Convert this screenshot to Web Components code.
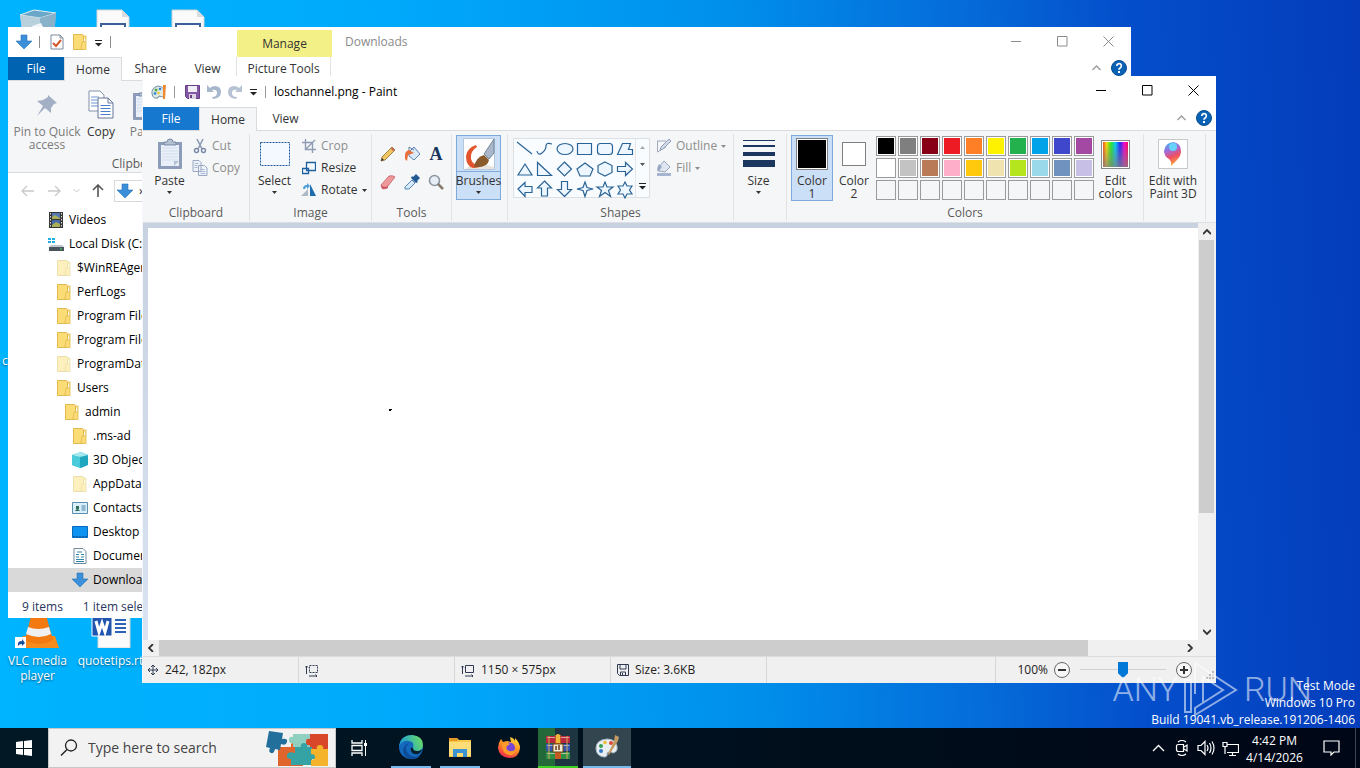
<!DOCTYPE html>
<html lang="en">
<head>
<meta charset="utf-8">
<title>Desktop</title>
<style>
  html,body{margin:0;height:100%;overflow:hidden}
  body{font:12px/16px "Open Sans","Noto Sans",sans-serif;color:#1e1e1e}
</style>
</head>
<body>
<desktop-shell>
  <desktop-icon icon="bin" style="grid-area:1/1"></desktop-icon>
  <desktop-icon icon="doc" style="grid-area:1/2"></desktop-icon>
  <desktop-icon icon="doc" style="grid-area:1/3"></desktop-icon>
  <desktop-icon style="grid-area:4/1;text-align:left">c</desktop-icon>
  <desktop-icon icon="vlc" style="grid-area:7/1">VLC media player</desktop-icon>
  <desktop-icon icon="word" style="grid-area:7/2">quotetips.rtf</desktop-icon>

  <app-window class="explorer" slot="windows" inactive>
    <explorer-quick slot="quick"></explorer-quick>
    <span slot="title">Downloads</span>
    <ribbon-tab slot="tabs" kind="file">File</ribbon-tab>
    <ribbon-tab slot="tabs" kind="active">Home</ribbon-tab>
    <ribbon-tab slot="tabs">Share</ribbon-tab>
    <ribbon-tab slot="tabs">View</ribbon-tab>
    <ribbon-tab slot="tabs" kind="tool">Picture Tools</ribbon-tab>
    <explorer-body></explorer-body>
  </app-window>

  <app-window class="paint" slot="windows">
    <paint-quick slot="quick"></paint-quick>
    <span slot="title">loschannel.png - Paint</span>
    <ribbon-tab slot="tabs" kind="file">File</ribbon-tab>
    <ribbon-tab slot="tabs" kind="active">Home</ribbon-tab>
    <ribbon-tab slot="tabs">View</ribbon-tab>
    <paint-ribbon></paint-ribbon>
    <paint-workspace></paint-workspace>
    <paint-status></paint-status>
  </app-window>

  <run-mark slot="mark"></run-mark>
  <task-bar slot="taskbar"></task-bar>
</desktop-shell>

<script>
// name: [width, height, svg content]
const folder = (a,b)=> `<path d="M.5.5h9l1 1.500V15.500H.5z" fill="${a}" stroke="${b}"/><path d="M9 8l4-.5v8H8z" fill="${a}" stroke="${b}" stroke-width=".8"/><path d="M10.500 2H13v5.500" fill="${a}" stroke="${b}" stroke-width=".8"/>`;
const ICONS = {
  bin: [48,48,`<path d="M6 15l14-5 22 3-3 35H10z" fill="#9fc0d4"/><path d="M6 15l14-5 22 3-16 5z" fill="#6aa7c8" stroke="#e6eef2"/><path d="M6 15l20 3v30H10z" fill="#b9d0dd"/><path d="M26 18l16-5-3 35H26z" fill="#88b1ca"/><path d="M18 26l9-3 4 8-8 5z" fill="#f3f7fa"/>`],
  doc: [48,48,`<path d="M8 10h25l7 7v31H8z" fill="#fafafa" stroke="#d0d3d6"/><path d="M33 10v7h7z" fill="#d9dde0"/><path d="M12 24h24v24H12z" fill="#fff" stroke="#3d5f9c" stroke-width="2"/>`],
  word: [48,48,`<path d="M9 10h25l7 7v31H9z" fill="#fbfbfb" stroke="#d5d5d5"/><path d="M26 20h11M26 24h11M26 28h11M26 32h11" stroke="#2c62b8" stroke-width="2"/><path d="M3 16h20v20H3z" fill="#1f55ae" stroke="#fff"/><path d="M7 21l3 11 3-9 3 9 3-11" fill="none" stroke="#fff" stroke-width="3"/>`],
  vlc: [48,48,`<path d="M9 36h32l4 12H5z" fill="#f78c1e"/><path d="M20 4h9l10 36q-14 8-28 0z" fill="#f27a10"/><path d="M18 8h13l2 7q-9 3-17 0z" fill="#eee"/><path d="M14 27q10 4 21 0l2 7q-12 6-25 0z" fill="#f0f0f0"/><path d="M1 37h11v11H1z" fill="#fff"/><path d="M4 46q-1-5 4-5v-2l3 4-3 3v-2q-3 0-4 2z" fill="#1a4f9c"/>`],
  down: [16,16,`<path d="M5 1h6v6h5l-8 8-8-8h5z" fill="#3b8fd8" stroke="#2a72ba" stroke-width=".6"/>`],
  check: [14,16,`<path d="M1 1h9l3 3v11H1z" fill="#fff" stroke="#7c8a9c"/><path d="M10 1v3h3" fill="none" stroke="#7c8a9c"/><path d="M3 9l3 3 5-6" fill="none" stroke="#d4572a" stroke-width="2"/>`],
  folder: [14,16,folder('#fbdc77','#e3b84d')],
  pale: [14,16,folder('#fdf0bf','#eddfa8')],
  more: [9,9,`<path d="M1 2.500h7" stroke="#222"/><path d="M1 5h7l-3.500 3.500z" fill="#222"/>`],
  caret: [5,3,`<path d="M0 0h5L2.500 3z" fill="currentColor"/>`],
  caretup: [5,3,`<path d="M0 3h5L2.500 0z" fill="#a8a8a8"/>`],
  min: [11,11,`<path d="M0 5.500h10" stroke="currentColor"/>`],
  max: [11,11,`<path d="M.5.5h9.500v9.500H.5z" fill="none" stroke="currentColor"/>`],
  close: [11,11,`<path d="M.5.5l10 10M10.500.5l-10 10" stroke="currentColor"/>`],
  chevron: [9,6,`<path d="M.5 5l4-4 4 4" fill="none" stroke="#a0a0a0" stroke-width="1.500"/>`],
  help: [16,16,`<circle cx="8" cy="8" r="7.500" fill="#0a62b5" stroke="#064d94"/><path d="M5.800 6q0-2.300 2.300-2.300T10.300 6q0 1.200-1.200 1.900Q8 8.500 8 9.800" fill="none" stroke="#fff" stroke-width="1.700"/><path d="M7 11h2v2H7z" fill="#fff"/>`],
  pin: [24,24,`<path d="M13 2l9 8-3 1-3 4 0 5-6-5-8 8 6-10-6-5 6-1 5-3z" fill="#a3afc4"/>`],
  pages: [26,30,`<path d="M1 1h11l4 4v16H1z" fill="#fff" stroke="#8391a8"/><path d="M3 7h8M3 10h8M3 13h8M3 16h8" stroke="#6b94cf"/><path d="M10 8h10l5 5v15H10z" fill="#fff" stroke="#65779a"/><path d="M20 8v5h5" fill="none" stroke="#65779a"/><path d="M12.500 15.500h10M12.500 18.500h10M12.500 21.500h10M12.500 24.500h10" stroke="#4a80cb"/>`],
  paste: [26,32,`<path d="M1 4h24v26q0 1-1 1H2q-1 0-1-1z" fill="#8d9cb8"/><path d="M4 7h18v21H4z" fill="#eaf0fa"/><path d="M5 10h16M5 13h16M5 16h16M5 19h16M5 22h16" stroke="#d4ddec"/><path d="M17 28v-5h5z" fill="#b4c2d8"/><path d="M7 7V4h3q0-3 3-3t3 3h3v3z" fill="#b5c0d1" stroke="#7787a5"/>`],
  back: [14,12,`<path d="M6 1L1 6l5 5M1 6h12" fill="none" stroke="#c9c9c9" stroke-width="1.300"/>`],
  fwd: [14,12,`<path d="M8 1l5 5-5 5M13 6H1" fill="none" stroke="#c9c9c9" stroke-width="1.300"/>`],
  dim: [7,5,`<path d="M.5 1l3 3 3-3" fill="none" stroke="#c9c9c9"/>`],
  up: [12,14,`<path d="M1 6l5-5 5 5M6 1v12" fill="none" stroke="#555" stroke-width="1.600"/>`],
  video: [16,16,`<path d="M1 0h14v16H1z" fill="#343434"/><path d="M4 1h8v6H4z" fill="#5478b4"/><path d="M4 8h8v7H4z" fill="#4867aa"/><path d="M4 5l3-2 5 3v1H4zM4 13l4-3 4 2v3H4z" fill="#a8ae55"/><path d="M2.500 1v15M13.500 1v15" stroke="#ddd" stroke-dasharray="1.500 1.500"/>`],
  disk: [16,16,`<path d="M0 2h3v2H0zm4 0h3v2H4zM0 5h3v2H0zm4 0h3v2H4z" fill="#22b0e2"/><path d="M3 9h11l2 2H1z" fill="#bfc5ca"/><path d="M1 11h15v4H1z" fill="#4b545c"/><path d="M12 13h2" stroke="#3be05b"/>`],
  cube: [16,16,`<path d="M0 3l9-3 7 3v10l-7 3-9-3z" fill="#1fa7c0"/><path d="M0 3l8 2v11l-8-3z" fill="#49cbd9"/><path d="M0 3l9-3 7 3-8 2z" fill="#a5e9ee"/>`],
  card: [16,16,`<path d="M.5 2.500h15v11H.5z" fill="#d9effa" stroke="#5d8fb0"/><path d="M3 11q2-4 5 0zM4 6h3v3H4z" fill="#2f6d5b"/><path d="M9.500 6h4M9.500 8h4M9.500 10h4" stroke="#4581aa"/>`],
  desk: [16,16,`<path d="M.5 2.500h15v11H.5z" fill="#0f93f2" stroke="#0a69ba"/><path d="M1 12.500h14" stroke="#075faf" stroke-dasharray="2 1"/>`],
  docs: [16,16,`<path d="M2 .5h9l3 3v12H2z" fill="#fff" stroke="#6f8b9f"/><path d="M5 4h5M4 6.500h3M9 6.500h3M4 9h3M9 9h3M4 11.500h8M4 13.500h8" stroke="#2f86a8"/>`],
  paint: [16,16,`<path d="M7 2Q0 4 1 10q1 5 6 4l1-2q4 2 5-1 2-8-6-9z" fill="#dfe9e4" stroke="#6c8ca8"/><circle cx="5" cy="6" r="1.500" fill="#57a843"/><circle cx="9" cy="5" r="1.300" fill="#3b7fd0"/><circle cx="4" cy="9.500" r="1.400" fill="#3a90d8"/><circle cx="7.500" cy="9" r="1.300" fill="#f0c72e"/><path d="M12 1h3l-1 14h-2z" fill="#ee8a32"/>`],
  save: [15,14,`<path d="M.5.5h14v13h-12l-2-2z" fill="#8558a5" stroke="#663f86"/><path d="M3 1h9v6H3z" fill="#f2eef6"/><path d="M4 9h7v5H4z" fill="#ddd4e4"/><path d="M5 10h2v3H5z" fill="#663f86"/>`],
  undo: [14,14,`<path d="M0 0v7h7L5 5q5-1 5 3t-5 4l1 2q8-1 8-7T8 1Q5 1 3 3z" fill="#a9b7cd"/>`],
  redo: [14,14,`<path d="M14 0v7H7l2-2Q4 4 4 8t5 4l-1 2Q0 13 0 7t6-6q3 0 5 2z" fill="#b7c2d4"/>`],
  cut: [16,16,`<path d="M5 1l5 10M11 1L6 11" stroke="#8c9ab4" stroke-width="1.600"/><circle cx="4.500" cy="12.500" r="2" fill="none" stroke="#7888a8" stroke-width="1.400"/><circle cx="11.500" cy="12.500" r="2" fill="none" stroke="#7888a8" stroke-width="1.400"/>`],
  copy: [16,16,`<path d="M1 .5h6l2 2v9H1zM6.500 5.500h6l2.500 2.500v7.500H6.500z" fill="#eef3fa" stroke="#98a7c2"/><path d="M2.500 3.500h4M2.500 5.500h3M2.500 7.500h3M8.500 9.500h4M8.500 11.500h5M8.500 13.500h5" stroke="#a9b9d5"/>`],
  select: [30,24,`<path d="M.5.5h29v23H.5z" fill="#f3f9ff" stroke="#1d5a97" stroke-dasharray="2 1"/>`],
  crop: [14,14,`<path d="M3.500 0v10.500H14M0 3.500h10.500V14M4 10l9-9" fill="none" stroke="#8f9cb5" stroke-width="1.400"/>`],
  resize: [14,14,`<path d="M.5 7.500h6v5h-6zM4.500 1.500h9v8h-9z" fill="#f5faff" stroke="#1d5f9f" stroke-width="1.300"/>`],
  rotate: [16,16,`<path d="M7 14H0l7-7z" fill="#aeb9c6"/><path d="M9 14h6L9 2z" fill="#1d6caf"/><path d="M2 7q0-4 4-4V1l3 3-3 3V5Q4 5 4 7z" fill="#4d9fd8"/>`],
  pencil: [16,16,`<path d="M1 15l1-4L12 1l3 3L5 14z" fill="#f0c65e" stroke="#8a6a2f" stroke-width=".8"/><path d="M1 15l1-3 2 2z" fill="#333"/><path d="M12 1l3 3-2 1-2-2z" fill="#c46655"/>`],
  bucket: [16,16,`<path d="M5 6l5-5 6 7-6 6-5-4z" fill="#dbe8f6" stroke="#5a82b5"/><path d="M5 5V1l5 3" fill="none" stroke="#6b7f9c"/><path d="M5 4Q0 5 1 13l2 2 1-6 6-2z" fill="#e9703c"/>`],
  eraser: [16,16,`<path d="M1 11l8-9q4-1 6 1l-7 9q-3 4-6 2z" fill="#ee9a9d" stroke="#bf5e66" stroke-width=".8"/><path d="M1 11q3 3 7 1v2q-3 2-6 1z" fill="#d25f69"/>`],
  dropper: [16,16,`<path d="M9 3l3-3 4 4-3 3 1 1-2 1-5-5 1-2z" fill="#245a94"/><path d="M8 6l3 3-6 6H1v-2z" fill="#d7ebfa" stroke="#5588b8"/>`],
  zoom: [16,16,`<circle cx="6.500" cy="6.500" r="5" fill="#e7eef5" stroke="#8d979f" stroke-width="1.600"/><path d="M10 10l5 5" stroke="#877b70" stroke-width="2.500"/>`],
  brush: [32,32,`<path d="M.5.5h31v31H.5z" fill="#fff" stroke="#b4c7dc"/><path d="M2 31q5-5 20-5l9 3v2z" fill="#e9e4e0"/><path d="M13 7Q4 10 3 18q0 10 7 12 8 0 8-3-8 1-10-6-1-8 6-12z" fill="#e2552c"/><path d="M21 16L31 1v14l-5 6z" fill="#a9b7c8" stroke="#74879d"/><path d="M11 29q2-10 10-12l5 5q-1 8-15 7z" fill="#8a5a2c"/>`],
  pen: [16,16,`<path d="M1 3h9M1.500 3v11L10 9" fill="none" stroke="#a0a9bd"/><path d="M4 12l1-3 8-8 2 2-8 8z" fill="#d0d8e6" stroke="#95a1ba"/>`],
  fill: [16,16,`<path d="M3 7l5-6 6 6-5 5-6-1z" fill="#e0e6f0" stroke="#98a5bf"/><path d="M3 4Q0 9 2 12l4-5z" fill="#97a8c6"/><path d="M1 13h14v3H1z" fill="#a6b6d0"/>`],
  sizes: [32,28,`<path d="M0 0h32v1H0zM0 5h32v2H0zM0 12h32v4H0zM0 20h32v7H0z" fill="#1b365f"/>`],
  pin3d: [30,30,`<defs><linearGradient id="g" x1="0" y1="0" x2=".3" y2="1"><stop offset="0" stop-color="#38bdf4"/><stop offset=".4" stop-color="#a06bdc"/><stop offset=".7" stop-color="#f14d64"/><stop offset="1" stop-color="#f9a13c"/></linearGradient></defs><path d="M.5.5h29v29H.5z" fill="#fff" stroke="#c8c8c8"/><path d="M13 27q1-4-2-7-5-3-5-8 1-8 9-9 8 1 8 9 0 5-4 9z" fill="url(#g)"/><circle cx="15" cy="8" r="4" fill="#67d3fa"/>`],
  cross: [12,12,`<path d="M6 1v10M1 6h10M4 3l2-2 2 2M4 9l2 2 2-2M3 4L1 6l2 2M9 4l2 2-2 2" fill="none" stroke="#303a55"/>`],
  selsize: [14,13,`<path d="M1.500 10V2M0 3.500L1.500 2 3 3.500M4 12h8M10.500 10.500L12 12l-1.500 1.500" fill="none" stroke="#303a55"/><path d="M4.500 1.500h8v7h-8z" fill="none" stroke="#303a55" stroke-dasharray="2 1"/>`],
  imgsize: [14,13,`<path d="M1.500 10V2M0 3.500L1.500 2 3 3.500M4 12h8M10.500 10.500L12 12l-1.500 1.500M4.500 1.500h8v7h-8z" fill="none" stroke="#303a55"/>`],
  disk2: [12,12,`<path d="M.5.5h11v11h-9l-2-2zM3 1v4h6V1M3.500 11.500V8h5v3.500M5.500 9v2" fill="none" stroke="#303a55"/>`],
  minus: [16,16,`<circle cx="8" cy="8" r="7.500" fill="#f7f7f7" stroke="#666"/><path d="M4 8h8" stroke="#333" stroke-width="2"/>`],
  plus: [16,16,`<circle cx="8" cy="8" r="7.500" fill="#f7f7f7" stroke="#666"/><path d="M4 8h8M8 4v8" stroke="#333" stroke-width="2"/>`],
  grip: [8,8,`<path d="M6 0h2v2H6zM3 3h2v2H3zm3 0h2v2H6zM0 6h2v2H0zm3 0h2v2H3zm3 0h2v2H6z" fill="#bbb"/>`],
  aleft: [6,8,`<path d="M5 0L1 4l4 4" fill="none" stroke="#333" stroke-width="1.800"/>`],
  aright: [6,8,`<path d="M1 0l4 4-4 4" fill="none" stroke="#333" stroke-width="1.800"/>`],
  aup: [8,6,`<path d="M0 5l4-4 4 4" fill="none" stroke="#333" stroke-width="1.800"/>`],
  adown: [8,6,`<path d="M0 1l4 4 4-4" fill="none" stroke="#333" stroke-width="1.800"/>`],
  start: [16,16,`<path d="M0 2l7-1v7H0zM8 1l8-1v8H8zM0 9h7v6l-7-1zM8 9h8v7l-8-1z" fill="#fff"/>`],
  search: [18,18,`<circle cx="11" cy="6.500" r="5.500" fill="none" stroke="#222" stroke-width="1.300"/><path d="M7 10.500L1 16.500" stroke="#222" stroke-width="1.500"/>`],
  puzzle: [62,36,`<path d="M12 17h13v-3q3-3 6 0v3h6v19H12z" fill="#e0652c"/><path d="M27 4h17v13H27v-4q-4 1-4-3t4-3z" fill="#8fd0c0"/><path d="M44 4h18v15H44v-4q-4 1-4-3t4-3z" fill="#d9472b"/><path d="M29 17h6q-1-4 3-4t3 4h5v6q4-1 4 3t-4 3v6H25v-6q-5 0-4-4t8-2z" fill="#35a2a4"/><path d="M45 19h6q-1-4 3-4t3 4h5v17H45v-6q4 0 4-3t-4-3z" fill="#f5b32b"/><path d="M3 1l14 2-1 6q6-1 5 3t-6 2l-1 6-5-1q-1 5-4 4t-1-5L0 17z" fill="#226f9c"/>`],
  tasks: [18,16,`<path d="M1 0v3h10V0M1 16v-3h10v3M1 5.500h10v5H1z" fill="none" stroke="#fff" stroke-width="1.300"/><path d="M14.500 0v16" stroke="#fff"/><path d="M13 3h3v3h-3z" fill="#fff"/>`],
  edge: [26,26,`<defs><linearGradient id="e" x1="0" y1=".6" x2="1" y2=".3"><stop offset="0" stop-color="#1597dd"/><stop offset="1" stop-color="#6bdc65"/></linearGradient></defs><circle cx="13" cy="13" r="12" fill="#1469bd"/><path d="M1 12Q3 1 14 1q11 1 11 10 0 6-7 6-4 0-3-3 2-6-4-7Q5 6 1 12z" fill="url(#e)"/><path d="M12 9q-6 3-3 9 5 7 13 4-4 4-10 3-7-2-7-9 1-6 7-7z" fill="#0d4c98"/><path d="M15 14q0 3 4 3 4 0 5-2 0 3-4 5-5 1-7-3-1-5 2-3z" fill="#06202f"/>`],
  files: [24,24,`<path d="M1 3h8l2 2h12v17H1z" fill="#f7c748"/><path d="M1 7h22v14H1z" fill="#fcdd78"/><path d="M1 3h8l1 3H1z" fill="#e49a27"/><path d="M5 22v-8h14v8h-4v-4H9v4z" fill="#3c93d2"/>`],
  firefox: [24,24,`<defs><linearGradient id="f" x1=".8" y1="0" x2=".3" y2="1"><stop offset="0" stop-color="#ffe13b"/><stop offset=".5" stop-color="#ff8c24"/><stop offset="1" stop-color="#f0244d"/></linearGradient></defs><path d="M4 4l2 3 4-1 4 1-1-5q4 1 5 4V3q5 5 5 10-1 10-11 10Q2 22 1 13q0-5 3-9z" fill="url(#f)"/><circle cx="12.500" cy="13" r="5.500" fill="#7846d6"/><path d="M5 9q4-3 8 0l-3 2q-2 3 2 5 4 1 7-2-1 7-7 6-7-1-7-11z" fill="#ff9b2a"/>`],
  winrar: [26,26,`<path d="M1 2h24v7H1z" fill="#b8283f"/><path d="M1 10h24v7H1z" fill="#3657b2"/><path d="M1 18h24v7H1z" fill="#2d8e46"/><path d="M2 3.500h22M2 11.500h22M2 19.500h22" stroke="#e8d7c8" stroke-width=".7"/><path d="M4 2v23M22 2v23" stroke="#d3aa58"/><path d="M10 1h6v24h-6z" fill="#c65a20"/><path d="M11 1q2-2 4 0v8h-4z" fill="#f1b73a"/><path d="M8 10h10v8H8z" fill="#f4ead4" stroke="#754713"/><path d="M11 12v4M14 11v5" stroke="#633a17" stroke-width="1.500"/>`],
  palette: [26,26,`<path d="M13 5Q2 6 2 14t8 9q4 0 3-4 3-3 6 0 5-1 4-7-2-7-10-7z" fill="#e9eef0" stroke="#a7b9c5"/><circle cx="7" cy="12" r="2" fill="#35a054"/><circle cx="11" cy="8.500" r="1.800" fill="#efbb32"/><circle cx="17" cy="9" r="2" fill="#dd4b3a"/><circle cx="7" cy="17" r="2" fill="#3378c8"/><path d="M21 1l4 2-1 4-9 14-1-1 6-13z" fill="#c49a63"/>`],
  tup: [13,8,`<path d="M1 7l5.500-5.500L12 7" fill="none" stroke="#fff" stroke-width="1.300"/>`],
  meet: [14,16,`<path d="M3.500 4.500h5v7h-5q-2 0-2-2v-3q0-2 2-2zM9 7l3-2v6L9 9M3 2q4-3 8 0M3 14q4 3 8 0" fill="none" stroke="#fff" stroke-width="1.200"/>`],
  sound: [18,16,`<path d="M1 5.500h3l4-4v13l-4-4H1zM10 5q2 3 0 6M12.500 3q3 5 0 10M15 1.500q4 6.500 0 13" fill="none" stroke="#fff" stroke-width="1.200"/>`],
  net: [17,15,`<path d="M5.500 3.500h11v8H5M10.500 12v3M7 14.500h7M1 1.500h4v4H1zM3 6v7" fill="none" stroke="#fff" stroke-width="1.200"/>`],
  note: [17,16,`<path d="M1 1h15v11h-5l-3 3v-3H1z" fill="none" stroke="#fff" stroke-width="1.200"/>`],
  play: [56,58,`<path d="M12 34V3l41 27-41 25v-7l28-18-20-13v25"/><path d="M2 20v32h6V20z"/>`],
  // the shapes to draw, one per 20px cell
  gallery: [120,60,`<g fill="#eef7ff" stroke="#2a6496" stroke-width="1.200"><path d="M3 3l15 12"/><path d="M23 12q1 5 5 2t4-7 6-2" fill="none"/><ellipse cx="51" cy="10" rx="8" ry="5.500"/><path d="M63.500 4.500h14v11h-14z"/><rect x="83.500" y="4.500" width="15" height="11" rx="3"/><path d="M103.500 15.500l5-11h8l-2 6h4v5z"/>
  <path d="M11 25l7 11H4zM23.500 23.500v13h14zM50.500 23l7 7-7 7-7-7zM71 24l8 6-3 7h-10l-3-7zM91 23l7 3.500v7L91 37l-7-3.500v-7zM103.500 27.500h8v-4l7 6.500-7 6.500v-4h-8z"/>
  <path d="M4 50l7-6.500v4h7v6h-7v4zM30.500 42l7 7h-4v8h-6v-8h-4zM50.500 57.500l7-7h-4v-8h-6v8h-4zM71 43l2 5.500 6 1.500-6 1.500-2 6-2-6-6-1.500 6-1.500zM91 43l2 5h6l-4.500 3.500 2 6-5.500-4-5.500 4 2-6L83 48h6zM111 43l2 4h5l-2.500 4 2.500 4h-5l-2 4-2-4h-5l2.500-4-2.500-4h5z"/></g>`],
};

class Part extends HTMLElement {
  constructor(){
    super();
    this.attachShadow({mode:'open'});
  }
  connectedCallback(){ this.shadowRoot.innerHTML = '<style>*{box-sizing:border-box}button{font:inherit;color:inherit;border:0;background:none;padding:0;margin:0}</style>' + this.view(); }
}

customElements.define('ui-icon', class extends Part {
  view(){
    const [w,h,svg] = ICONS[this.getAttribute('name')];
    return `<style>:host{display:block;flex:none}svg{display:block}</style>
      <svg width="${w}" height="${h}" viewBox="0 0 ${w} ${h}" aria-hidden="true">${svg}</svg>`;
  }
});
const icon = (name)=> `<ui-icon name="${name}"></ui-icon>`;

customElements.define('desktop-shell', class extends Part {
  view(){ return `
    <style>
      :host{display:flex;flex-direction:column;height:100vh;overflow:hidden}
      .desk{position:relative;flex:1;overflow:hidden;
        background:linear-gradient(88deg,#00b4ff 0%,#00a9fb 30%,#0090ec 54%,#056ad8 72%,#044ecb 83%,#043cba 100%)}
      .icons{display:grid;grid-template-columns:repeat(3,75px);grid-template-rows:repeat(7,100px)}
      ::slotted(app-window){position:absolute}
      ::slotted(.explorer){top:27px;left:8px;right:229px;bottom:110px;--title-h:30px;--file:#0063b1}
      ::slotted(.paint){top:76px;left:142px;right:144px;bottom:45px;border-left:1px solid #f4f8fc;--title-h:31px}
      ::slotted(run-mark){position:absolute;right:0;bottom:0}
    </style>
    <div class="desk">
      <div class="icons"><slot></slot></div>
      <slot name="windows"></slot>
      <slot name="mark"></slot>
    </div>
    <slot name="taskbar"></slot>`;
  }
});

customElements.define('desktop-icon', class extends Part {
  view(){
    const name = this.getAttribute('icon');
    return `
    <style>
      :host{display:block;width:75px;height:100px;text-align:center;color:#fff;line-height:15px;overflow:visible}
      .pic{height:48px;display:flex;justify-content:center;margin-bottom:5px}
      .label{padding:0 2px;text-shadow:0 1px 2px #0008}
    </style>
    <div class="pic">${name ? icon(name) : ''}</div>
    <div class="label"><slot></slot></div>`;
  }
});

customElements.define('app-window', class extends Part {
  view(){ return `
    <style>
      :host{display:flex;flex-direction:column;background:#fff;overflow:hidden;box-sizing:border-box}
      .title{display:flex;height:var(--title-h);flex:none;color:#000}
      :host([inactive]) .title{color:#8a8a8a}
      .name{flex:1;line-height:var(--title-h)}
      .title button{width:46px;display:grid;place-items:center;padding-bottom:2px}
      .tabs{display:flex;height:24px;flex:none;border-bottom:1px solid #dadbdc}
      .tail{margin-left:auto;display:flex;align-items:center;gap:10px;padding:0 4px 2px 0}
    </style>
    <div class="title">
      <slot name="quick"></slot>
      <div class="name"><slot name="title"></slot></div>
      <button aria-label="Minimize">${icon('min')}</button>
      <button aria-label="Maximize">${icon('max')}</button>
      <button aria-label="Close">${icon('close')}</button>
    </div>
    <div class="tabs">
      <slot name="tabs"></slot>
      <div class="tail">${icon('chevron')}<button aria-label="Help">${icon('help')}</button></div>
    </div>
    <slot></slot>`;
  }
});

customElements.define('ribbon-tab', class extends Part {
  view(){ return `
    <style>
      :host{display:block;width:57px;height:24px}
      button{width:100%;height:23px;color:#333;white-space:nowrap}
      :host([kind=file]){width:56px}
      :host([kind=file]) button{background:var(--file,#1778cf);color:#fff}
      :host([kind=active]){width:58px}
      :host([kind=active]) button{height:24px;background:#f5f6f7;border:1px solid #dadbdc;border-bottom:0}
      :host([kind=tool]){width:95px}
      :host([kind=tool]) button{border:solid #e3e3e3;border-width:0 1px}
    </style>
    <button><slot></slot></button>`;
  }
});

customElements.define('explorer-quick', class extends Part {
  view(){ return `
    <style>
      :host{display:flex;width:337px;color:#333}
      .bar{display:flex;align-items:center;gap:7px;width:229px;padding-left:8px}
      .mid{display:flex;gap:9px;padding-left:3px}
      i{width:1px;height:12px;background:#8c8c8c}
      .manage{width:95px;margin-top:3px;line-height:28px;text-align:center;background:#f3f087}
    </style>
    <div class="bar">${icon('down')}<i></i><div class="mid">${icon('check')}${icon('folder')}</div>${icon('more')}<i></i></div>
    <div class="manage">Manage</div>`;
  }
});

customElements.define('paint-quick', class extends Part {
  view(){ return `
    <style>
      :host{display:flex;align-items:center;gap:7px;width:131px;padding-left:8px;box-sizing:border-box}
      i{width:1px;height:12px;background:#9a9a9a}
      .bar{display:flex;gap:7px;padding-left:3px}
    </style>
    ${icon('paint')}<i></i><div class="bar">${icon('save')}${icon('undo')}${icon('redo')}</div>${icon('more')}<i></i>`;
  }
});

customElements.define('ribbon-group', class extends Part {
  view(){ return `
    <style>
      :host{display:flex;flex-direction:column;flex:none;width:var(--w);height:87px;box-sizing:border-box;padding:1px 0 0 4px;border-right:1px solid #e1e2e4}
      .items{display:flex;height:70px}
      .label{line-height:16px;text-align:center;color:#5a5a5a;padding-right:4px}
    </style>
    <div class="items"><slot></slot></div>
    <div class="label"><slot name="label"></slot></div>`;
  }
});

customElements.define('big-button', class extends Part {
  view(){
    const name = this.getAttribute('icon');
    return `
    <style>
      :host{display:block;flex:none;width:45px}
      button{width:100%;height:66px;display:flex;flex-direction:column;align-items:center;border:1px solid transparent;padding-top:2px;color:#333;line-height:13px}
      .pic{height:32px;display:grid;place-items:center;margin-bottom:4px}
      ui-icon[name=caret]{margin-top:4px}
      :host([dim]) button{color:#7a7a7a}
      :host([picked]) button{background:#cbdff6;border-color:#7daad8}
      :host([split]) button{height:65px;background:linear-gradient(#7daad8,#7daad8) 0 35px/100% 1px no-repeat #cbdff6}
    </style>
    <button>
      <div class="pic">${name ? icon(name) : '<slot name="pic"></slot>'}</div>
      <span><slot></slot></span>
      ${this.hasAttribute('menu') ? icon('caret') : ''}
    </button>`;
  }
});

customElements.define('small-button', class extends Part {
  view(){ return `
    <style>
      :host{display:block;height:22px;color:#333}
      :host([dim]){color:#8e8e8e}
      button{height:22px;display:flex;align-items:center;gap:4px}
      .pic{width:16px;display:grid;place-items:center}
    </style>
    <button><span class="pic">${icon(this.getAttribute('icon'))}</span><slot></slot>${this.hasAttribute('menu') ? icon('caret') : ''}</button>`;
  }
});

const COLORS = ['#000000','#7f7f7f','#880015','#ed1c24','#ff7f27','#fff200','#22b14c','#00a2e8','#3f48cc','#a349a4',
  '#ffffff','#c3c3c3','#b97a57','#ffaec9','#ffc90e','#efe4b0','#b5e61d','#99d9ea','#7092be','#c8bfe7'];

customElements.define('color-palette', class extends Part {
  view(){
    const cells = [...Array(30).keys()].map(i =>
      `<button aria-label="Color ${i+1}" style="background:${COLORS[i] || '#f5f6f7'}"></button>`).join('');
    return `
    <style>
      :host{display:grid;grid-template-columns:repeat(10,20px);grid-auto-rows:20px;gap:2px;padding:1px 0 0 1px}
      button{border:1px solid #9b9b9b;box-shadow:inset 0 0 0 1px #fff}
      button:nth-of-type(n+21){box-shadow:none}
    </style>${cells}`;
  }
});

customElements.define('paint-ribbon', class extends Part {
  view(){ return `
    <style>
      :host{display:flex;flex:none;height:92px;padding:3px 0 0;background:#f5f6f7;border-bottom:1px solid #dcdfe3;box-sizing:border-box;overflow:hidden}
      .col{display:flex;flex-direction:column}
      .tools{display:grid;grid-template-columns:repeat(3,24px);grid-auto-rows:28px;padding:5px 0 0;place-items:center}
      .tools b{font:bold 18px/20px "Liberation Serif",serif;color:#17355f}
      .tools button{width:24px;height:22px;display:grid;place-items:center}
      .gallery{display:flex;width:137px;height:60px;margin:3px 6px 0 1px;border:1px solid #dcdfe4;background:#f9fcff}
      .gallery div{width:14px;margin-left:auto;border-left:1px solid #e4e6ea;display:flex;flex-direction:column;justify-content:space-around;align-items:center;color:#555}
      .one{width:32px;height:32px;background:#000;border:1px solid #808080;box-shadow:inset 0 0 0 1px #fff}
      .two{width:24px;height:24px;background:#fff;border:1px solid #808080}
      .rainbow{width:29px;height:29px;border:1px solid #888;box-shadow:inset 0 0 0 1px #fff;
        background:linear-gradient(#80808000,#808080cc),linear-gradient(90deg,#f22,#fd0,#2e2,#0cf,#22f,#f0c,#f03)}
      .narrow{width:41px}
      .line{white-space:nowrap}
      .gap{width:6px}
    </style>
    <ribbon-group style="--w:107px">
      <big-button icon="paste" menu>Paste</big-button>
      <div class="col"><small-button icon="cut" dim>Cut</small-button><small-button icon="copy" dim>Copy</small-button></div>
      <span slot="label">Clipboard</span>
    </ribbon-group>
    <ribbon-group style="--w:122px">
      <big-button class="narrow" icon="select" menu>Select</big-button><div class="gap"></div>
      <div class="col"><small-button icon="crop" dim>Crop</small-button><small-button icon="resize">Resize</small-button><small-button icon="rotate" menu>Rotate</small-button></div>
      <span slot="label">Image</span>
    </ribbon-group>
    <ribbon-group style="--w:80px">
      <div class="tools">
        <button aria-label="Pencil">${icon('pencil')}</button><button aria-label="Fill with color">${icon('bucket')}</button><button><b>A</b></button>
        <button aria-label="Eraser">${icon('eraser')}</button><button aria-label="Color picker">${icon('dropper')}</button><button aria-label="Magnifier">${icon('zoom')}</button>
      </div>
      <span slot="label">Tools</span>
    </ribbon-group>
    <ribbon-group style="--w:56px"><big-button icon="brush" menu picked split>Brushes</big-button></ribbon-group>
    <ribbon-group style="--w:226px">
      <div class="gallery">${icon('gallery')}<div>${icon('caretup')}${icon('caret')}${icon('more')}</div></div>
      <div class="col"><small-button icon="pen" menu dim>Outline</small-button><small-button icon="fill" menu dim>Fill</small-button></div>
      <span slot="label">Shapes</span>
    </ribbon-group>
    <ribbon-group style="--w:53px"><big-button class="narrow" icon="sizes" menu>Size</big-button></ribbon-group>
    <ribbon-group style="--w:357px">
      <big-button picked style="width:42px"><div slot="pic" class="one"></div>Color<br>1</big-button>
      <big-button style="width:42px"><div slot="pic" class="two"></div>Color<br>2</big-button>
      <color-palette></color-palette>
      <big-button style="width:43px"><div slot="pic" class="rainbow"></div>Edit<br>colors</big-button>
      <span slot="label">Colors</span>
    </ribbon-group>
    <ribbon-group style="--w:62px"><big-button class="line" icon="pin3d" style="width:50px">Edit with<br>Paint 3D</big-button></ribbon-group>`;
  }
});

customElements.define('paint-workspace', class extends Part {
  view(){ return `
    <style>
      :host{flex:1;min-height:0;display:grid;grid-template:1fr 16px/1fr 18px;background:#f0f0f0}
      .paper{background:linear-gradient(#c8d1e0,#dae3f1);padding:5px 0 0 5px;overflow:hidden}
      svg{display:block;width:100%;height:100%;background:#fff}
      .bar{display:flex;min-width:0;min-height:0}
      .v{flex-direction:column;padding:1px 2px 0 1px}
      .bar button{flex:0 0 16px;display:grid;place-items:center}
      .thumb{background:#cdcdcd}
      .v .thumb{flex:71}.v p{flex:29}
      .h .thumb{flex:908}.h p{flex:92}
      p{margin:0}
    </style>
    <div class="paper"><svg><path d="M241 181h3v1h-1v1h-2z"/></svg></div>
    <div class="bar v"><button aria-label="Scroll up">${icon('aup')}</button><div class="thumb"></div><p></p><button aria-label="Scroll down">${icon('adown')}</button></div>
    <div class="bar h"><button aria-label="Scroll left">${icon('aleft')}</button><div class="thumb"></div><p></p><button aria-label="Scroll right">${icon('aright')}</button></div>`;
  }
});

customElements.define('paint-status', class extends Part {
  view(){ return `
    <style>
      :host{display:flex;flex:none;height:27px;background:#f0f0f0;border-top:1px solid #dcdcdc;box-sizing:border-box;color:#222}
      .cell{display:flex;align-items:center;gap:6px;width:156px;padding-left:4px;border-right:1px solid #d7d7d7}
      .cell + .cell{padding-left:6px}
      .zoom{margin-left:auto;display:flex;align-items:center;padding:0 14px 0 21px;border-left:1px solid #d7d7d7}
      label{margin-right:6px}
      input{appearance:none;width:86px;height:18px;margin:0 10px;background:linear-gradient(#d0d0d0,#d0d0d0) 0 8px/100% 1px no-repeat}
      input::-webkit-slider-thumb{appearance:none;width:10px;height:16px;background:#0078d7;clip-path:polygon(0 0,100% 0,100% 70%,50% 100%,0 70%)}
      ui-icon[name=grip]{align-self:flex-end;margin:0 2px 4px 0}
    </style>
    <div class="cell">${icon('cross')}242, 182px</div>
    <div class="cell">${icon('selsize')}</div>
    <div class="cell">${icon('imgsize')}1150 × 575px</div>
    <div class="cell">${icon('disk2')}Size: 3.6KB</div>
    <div class="zoom"><label for="z">100%</label><button aria-label="Zoom out">${icon('minus')}</button>
      <input id="z" type="range" value="50"><button aria-label="Zoom in">${icon('plus')}</button></div>
    ${icon('grip')}`;
  }
});

customElements.define('tree-item', class extends Part {
  view(){ return `
    <style>
      :host{display:flex;align-items:center;gap:5px;height:24px;flex:none;padding-left:calc(40px + var(--lv,0)*8px);white-space:nowrap;color:#000}
      :host([picked]){background:#d9d9d9}
      .pic{width:16px;display:grid;place-items:center}
    </style>
    <span class="pic">${icon(this.getAttribute('icon'))}</span><slot></slot>`;
  }
});

customElements.define('explorer-body', class extends Part {
  view(){
    const items = [[0,'video','Videos'],[0,'disk','Local Disk (C:)'],[1,'pale','$WinREAgent'],[1,'folder','PerfLogs'],[1,'folder','Program Files'],
      [1,'folder','Program Files (x86)'],[1,'pale','ProgramData'],[1,'folder','Users'],[2,'folder','admin'],[3,'folder','.ms-ad'],[3,'cube','3D Objects'],
      [3,'pale','AppData'],[3,'card','Contacts'],[3,'desk','Desktop'],[3,'docs','Documents'],[3,'down','Downloads']];
    return `
    <style>
      :host{flex:1;min-height:0;display:flex;flex-direction:column}
      .ribbon{display:flex;flex:none;height:92px;padding-top:4px;background:#f5f6f7;border-bottom:1px solid #dadbdc}
      .nav{display:flex;align-items:center;flex:none;height:35px;gap:12px;padding-left:13px}
      .path{flex:1;height:22px;display:flex;align-items:center;gap:6px;border:1px solid #d9d9d9;padding-left:2px;margin-left:-2px}
      .tree{flex:1;min-height:0;display:flex;flex-direction:column;overflow:hidden}
      .foot{display:flex;flex:none;height:26px;align-items:center;gap:20px;padding:4px 14px 0;color:#2a3560;box-sizing:border-box}
    </style>
    <div class="ribbon">
      <ribbon-group style="--w:263px">
        <big-button icon="pin" dim style="width:70px">Pin to Quick access</big-button>
        <big-button icon="pages" style="width:38px">Copy</big-button>
        <big-button icon="paste" dim style="width:50px">Paste</big-button>
        <span slot="label">Clipboard</span>
      </ribbon-group>
    </div>
    <div class="nav">${icon('back')}${icon('fwd')}${icon('dim')}${icon('up')}<div class="path">${icon('down')}<span>›</span></div></div>
    <div class="tree">${items.map(([lv,ic,t])=> `<tree-item icon="${ic}" style="--lv:${lv}"${t==='Downloads' ? ' picked' : ''}>${t}</tree-item>`).join('')}</div>
    <div class="foot"><span>9 items</span><span>1 item selected</span></div>`;
  }
});

customElements.define('run-mark', class extends Part {
  view(){ return `
    <style>
      :host{display:grid;justify-items:end;pointer-events:none;color:#fff}
      .logo,.text{grid-area:1/1;align-self:end}
      .logo{display:flex;align-items:center;gap:5px;height:58px;margin-bottom:10px;padding-right:48px;opacity:.55;font:300 34px/40px Roboto,sans-serif}
      .logo ui-icon{fill:none;stroke:#fff;stroke-width:2}
      .text{text-align:right;padding-right:5px;line-height:17px}
    </style>
    <div class="logo"><span>ANY</span>${icon('play')}<span>RUN</span></div>
    <div class="text">Test Mode<br>Windows 10 Pro<br>Build 19041.vb_release.191206-1406</div>`;
  }
});

customElements.define('task-bar', class extends Part {
  view(){ return `
    <style>
      :host{display:flex;flex:none;height:40px;background:linear-gradient(90deg,#021925,#000e1c 60%,#000716);color:#fff}
      button{display:grid;place-items:center;width:48px;height:40px}
      .find{display:flex;align-items:center;width:288px;background:#f2f2f2;border:1px solid #c8c8c8;padding:0 7px 0 11px}
      input{flex:1;min-width:0;border:0;outline:0;background:none;font:14px/20px "Open Sans","Noto Sans",sans-serif;color:#444;padding:0 0 0 10px}
      input::placeholder{color:#444;opacity:1}
      .apps{display:flex;gap:1px;padding-left:3px}
      .apps button{border-bottom:2px solid transparent}
      .open{background:linear-gradient(#76b9ed,#76b9ed) 50% 100%/40px 2px no-repeat border-box}
      .rar{background:linear-gradient(#3fd024,#3fd024) 50% 100%/40px 2px no-repeat border-box,linear-gradient(90deg,#0000 4px,#24693a 4px 21px,#1d3540 21px 44px,#0000 44px) border-box}
      .on{background:linear-gradient(#76b9ed,#76b9ed) 50% 100%/100% 2px no-repeat border-box #33454f}
      .tray{margin-left:auto;display:flex;align-items:center}
      .tray button{width:24px}
      .clock{width:65px;text-align:center;line-height:17px;padding-top:1px}
      .tray .note{width:44px;margin-left:4px;padding-right:4px}
      i{width:1px;height:40px;background:#3c4650;margin-right:4px}
    </style>
    <button aria-label="Start">${icon('start')}</button>
    <div class="find">${icon('search')}<input placeholder="Type here to search" aria-label="Search">${icon('puzzle')}</div>
    <button aria-label="Task view">${icon('tasks')}</button>
    <div class="apps">
      <button class="open" aria-label="Edge">${icon('edge')}</button>
      <button class="open" aria-label="File Explorer">${icon('files')}</button>
      <button aria-label="Firefox">${icon('firefox')}</button>
      <button class="rar" aria-label="WinRAR">${icon('winrar')}</button>
      <button class="on" aria-label="Paint">${icon('palette')}</button>
    </div>
    <div class="tray">
      <button aria-label="Show hidden icons">${icon('tup')}</button><button aria-label="Meet now">${icon('meet')}</button>
      <button aria-label="Volume">${icon('sound')}</button><button aria-label="Network">${icon('net')}</button>
      <div class="clock">4:42 PM<br>4/14/2026</div>
      <button class="note" aria-label="Notifications">${icon('note')}</button><i></i>
    </div>`;
  }
});
</script>
</body>
</html>
